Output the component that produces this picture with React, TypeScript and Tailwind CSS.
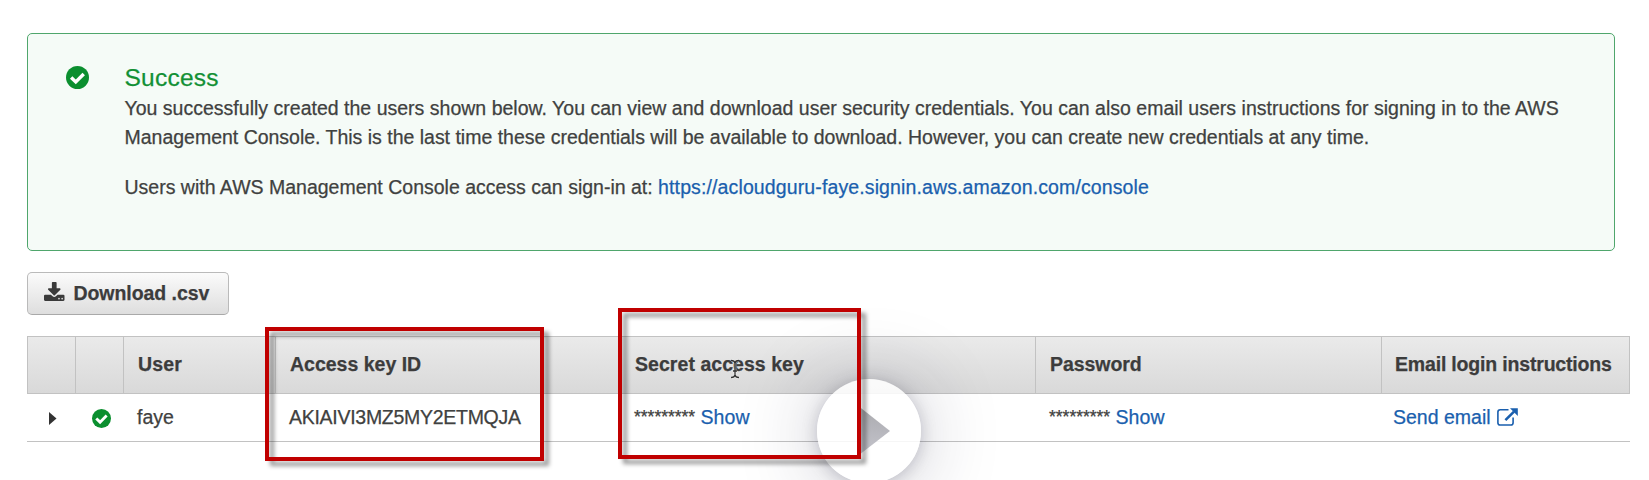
import type { ReactNode } from "react";

function CheckBadge({ className }: { className: string }) {
  return (
    <svg viewBox="0 0 24 24" className={className} aria-hidden="true">
      <circle cx="12" cy="12" r="12" fill="#0b8f2f" />
      <path d="M5.4 11.9l4.8 4.700 8.300-8.300" fill="none" stroke="#fff" strokeWidth="3.600" />
    </svg>
  );
}

function DownloadIcon() {
  return (
    <svg viewBox="0 0 1664 1536" className="h-[19px] w-[20.5px] shrink-0" fill="#3a3a3a" aria-hidden="true">
      <path d="M1280 1344q0-26-19-45t-45-19-45 19-19 45 19 45 45 19 45-19 19-45zm256 0q0-26-19-45t-45-19-45 19-19 45 19 45 45 19 45-19 19-45zm128-224v320q0 40-28 68t-68 28h-1472q-40 0-68-28t-28-68v-320q0-40 28-68t68-28h465l135 136q58 56 136 56t136-56l136-136h464q40 0 68 28t28 68zm-325-569q17 41-14 70l-448 448q-18 19-45 19t-45-19l-448-448q-31-29-14-70 17-39 59-39h256v-448q0-26 19-45t45-19h256q26 0 45 19t19 45v448h256q42 0 59 39z" />
    </svg>
  );
}

function ExternalLinkIcon() {
  return (
    <svg viewBox="0 0 21 18" className="h-[18px] w-[21px] shrink-0" fill="none" stroke="#1a5fae" aria-hidden="true">
      <path d="M11.5 1.8H3.2Q.9 1.8.9 4.1v10.6Q.9 17 3.2 17h10.6q2.3 0 2.3-2.3V9.5" strokeWidth="1.6" />
      <path d="M8.4 12.2L17 3.6" strokeWidth="2.6" />
      <path d="M13 .2h7.8V8z" fill="#1a5fae" stroke="none" />
    </svg>
  );
}

function HeaderCell({ children, className = "" }: { children?: ReactNode; className?: string }) {
  return (
    <div className={`flex items-center border-l border-[#c2c2c2] whitespace-nowrap ${className}`}>
      {children}
    </div>
  );
}

function HiddenSecret() {
  return (
    <div className="flex items-center pl-[14px]">
      <span className="w-[66.5px] text-[17.6px] tracking-[-0.05px]">*********</span>
      <a className="tracking-[0.1px] text-[#1a5fae]">Show</a>
    </div>
  );
}

const columns = "grid grid-cols-[48px_48px_152px_345px_415px_346px_249px]";

export default function App() {
  return (
    <div className="relative h-[480px] w-[1649px] overflow-hidden bg-white pt-[33px] pl-[27px] font-['Liberation_Sans',Arial,sans-serif] text-[19.5px] text-[#3f4140] [-webkit-text-stroke:0.25px]">
      <section className="flex h-[218px] w-[1588px] rounded-[5px] border-[1.5px] border-[#4fa66c] bg-[#f5fbf7] pt-[28px] pl-[38px]">
        <CheckBadge className="mt-[4px] h-[23px] w-[23px] shrink-0" />
        <div className="ml-[35.5px] whitespace-nowrap leading-[29px]">
          <h1 className="mb-px text-[24.5px] leading-[31px] tracking-[0.25px] text-[#129035]">Success</h1>
          <p className="tracking-[0.01px]">
            You successfully created the users shown below. You can view and download user security credentials. You can also email users instructions for signing in to the AWS
          </p>
          <p className="tracking-[-0.01px]">
            Management Console. This is the last time these credentials will be available to download. However, you can create new credentials at any time.
          </p>
          <p className="mt-[21px]">
            Users with AWS Management Console access can sign-in at:{" "}
            <a className="tracking-[0.12px] text-[#1a5fae]">https://acloudguru-faye.signin.aws.amazon.com/console</a>
          </p>
        </div>
      </section>

      <button className="mt-[21px] flex h-[43px] w-[202px] items-center gap-[9px] rounded-[5px] border border-[#bababa] border-b-[#a9a9a9] bg-linear-to-b from-[#fbfbfb] to-[#dedede] pl-[16px] font-bold text-[#3c3c3c]">
        <span className="-mt-[5px]">
          <DownloadIcon />
        </span>
        <span className="tracking-[-0.06px]">Download .csv</span>
      </button>

      <div className="mt-[21px] w-[1603px]">
        <div className={`${columns} h-[58px] border-y border-r border-[#c2c2c2] bg-linear-to-b from-[#eaeaea] to-[#d9d9d9] font-bold text-[#3c3c3c]`}>
          <HeaderCell />
          <HeaderCell />
          <HeaderCell className="pl-[14px] tracking-[0.2px]">User</HeaderCell>
          <HeaderCell className="pl-[14px]">Access key ID</HeaderCell>
          <HeaderCell className="pl-[14px] tracking-[0.05px]">Secret access key</HeaderCell>
          <HeaderCell className="pl-[14px] tracking-[-0.05px]">Password</HeaderCell>
          <HeaderCell className="pl-[13px] tracking-[-0.18px]">Email login instructions</HeaderCell>
        </div>
        <div className={`${columns} h-[47.5px] border-b border-[#c2c2c2]`}>
          <div className="flex items-center pl-[22px]">
            <svg viewBox="0 0 8 13" className="mt-[3px] h-[13px] w-[8px]" aria-hidden="true">
              <path d="M0 0l7.5 6.5L0 13z" fill="#333" />
            </svg>
          </div>
          <div className="flex items-center pl-[17px]">
            <CheckBadge className="mt-[3px] h-[19px] w-[19px]" />
          </div>
          <div className="flex items-center pl-[14px]">faye</div>
          <div className="flex items-center pl-[14px] tracking-[-0.28px]">AKIAIVI3MZ5MY2ETMQJA</div>
          <HiddenSecret />
          <HiddenSecret />
          <div className="flex items-center gap-[6px] pl-[12px] text-[#1a5fae]">
            <a>Send email</a>
            <ExternalLinkIcon />
          </div>
        </div>
      </div>

      <svg viewBox="0 0 10 20" className="absolute top-[359px] left-[730px] h-[20px] w-[10px]" fill="none" aria-hidden="true">
        <path d="M1 1.5q3.5 0 4 2.5.5-2.5 4-2.5M5 4v12M1 18.5q3.5 0 4-2.5.5 2.5 4 2.5M3 12h4" stroke="#fff" strokeOpacity=".6" strokeWidth="2.6" />
        <path d="M1 1.5q3.5 0 4 2.5.5-2.5 4-2.5M5 4v12M1 18.5q3.5 0 4-2.5.5 2.5 4 2.5M3 12h4" stroke="#333" strokeWidth="1.3" />
      </svg>

      <div className="absolute top-[379px] left-[817px] h-[104px] w-[104px] rounded-full bg-white/85 shadow-[0_2px_16px_rgba(30,30,60,0.22),0_4px_80px_rgba(30,30,60,0.26)]">
        <svg viewBox="0 0 104 104" className="h-full w-full" aria-hidden="true">
          <defs>
            <linearGradient id="play" x1="0" y1="0" x2="0" y2="1">
              <stop offset="0" stopColor="#aaaaae" />
              <stop offset="1" stopColor="#c4c4cc" />
            </linearGradient>
          </defs>
          <path d="M42 27.5L73 52 42 76z" fill="url(#play)" />
        </svg>
      </div>

      <div className="absolute top-[327px] left-[265px] h-[134px] w-[279px] border-4 border-[#c00000] drop-shadow-[5px_5px_2px_rgba(0,0,0,0.4)]" />
      <div className="absolute top-[308px] left-[618px] h-[151px] w-[243px] border-4 border-[#c00000] drop-shadow-[5px_5px_2px_rgba(0,0,0,0.4)]" />
    </div>
  );
}
